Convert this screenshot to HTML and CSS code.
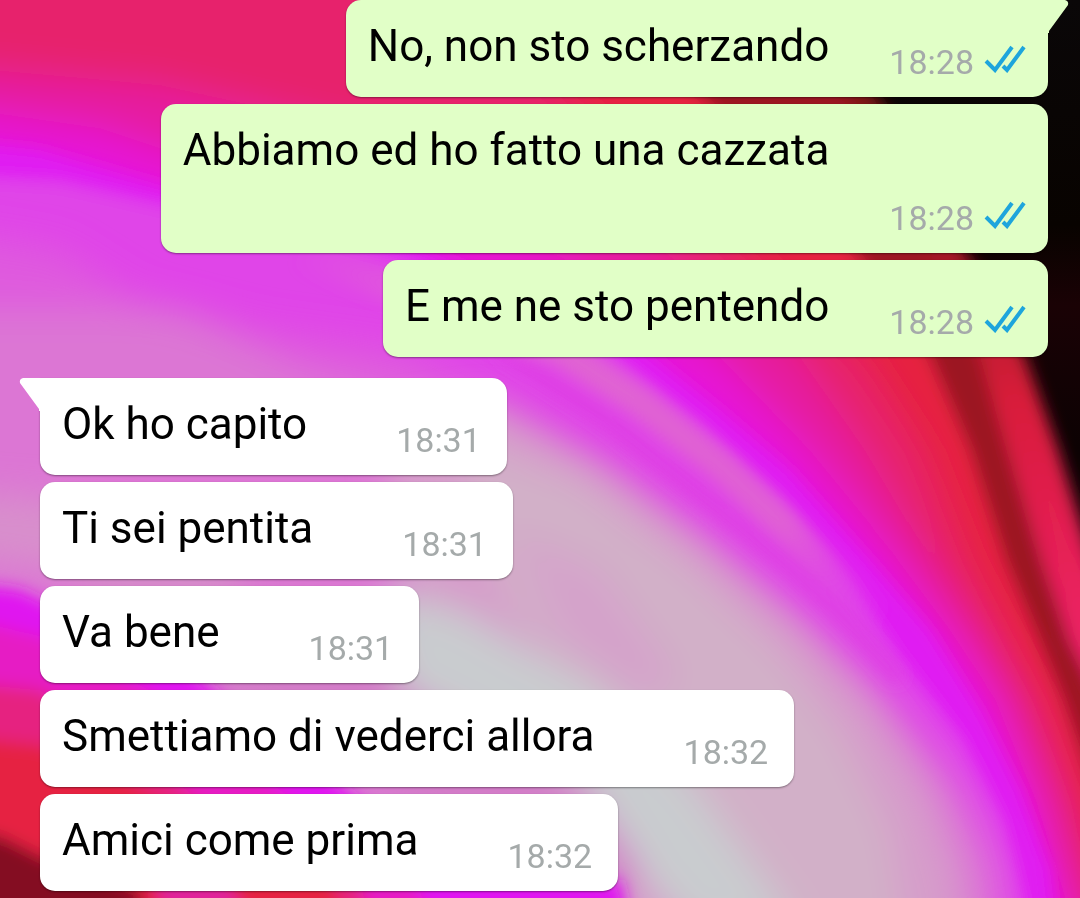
FILE: index.html
```
<!DOCTYPE html>
<html lang="it">
<head>
  <meta charset="utf-8">
  <meta name="viewport" content="width=device-width, initial-scale=1">
  <title>Chat</title>
  <link rel="stylesheet" href="styles.css">
</head>
<body>
  <!-- Wallpaper -->
  <svg class="wallpaper" viewBox="0 0 1080 898" preserveAspectRatio="none" aria-hidden="true">
    <defs>
      <filter id="soft" x="-20%" y="-20%" width="140%" height="140%"><feGaussianBlur stdDeviation="8"/></filter>
      <filter id="softer" x="-20%" y="-20%" width="140%" height="140%"><feGaussianBlur stdDeviation="18"/></filter>
      <linearGradient id="night" x1="0" y1="0" x2="0" y2="1">
        <stop offset="0" stop-color="#0a0708"/>
        <stop offset="0.25" stop-color="#080300"/>
        <stop offset="0.34" stop-color="#1a0205"/>
        <stop offset="0.5" stop-color="#0c0203"/>
      </linearGradient>
      <linearGradient id="rim" x1="0" y1="0" x2="0" y2="1">
        <stop offset="0.2" stop-color="#7c1216"/>
        <stop offset="0.45" stop-color="#d81f3a"/>
        <stop offset="0.7" stop-color="#ee2068"/>
      </linearGradient>
      <linearGradient id="streak" gradientUnits="userSpaceOnUse" x1="300" y1="250" x2="900" y2="600">
        <stop offset="0" stop-color="#e065d2" stop-opacity="0"/>
        <stop offset="0.3" stop-color="#e065d2"/>
        <stop offset="0.8" stop-color="#e060d4"/>
        <stop offset="1" stop-color="#e040ea" stop-opacity="0"/>
      </linearGradient>
    </defs>
    <rect width="1080" height="898" fill="url(#night)"/>
    <g filter="url(#soft)">
      <path fill="url(#rim)" d="M-60 -60H760L880 100L968 256L1025 357L1058 450L1092 560L1140 700V960H-60Z"/>
      <path fill="#9c1722" d="M-60 -60H600L850 100L930 256L980 357L1008 450L1042 560L1070 640L1100 700L1140 960H-60Z"/>
      <path fill="#e62440" d="M-60 -60H500L705 100L858 256L930 357L970 450L1005 560L1038 640L1062 700L1095 800L1120 960H-60Z"/>
    </g>
    <g filter="url(#softer)">
      <path fill="#e7236c" d="M-60 -60H400L560 90L750 256L865 357L925 450L968 560L1010 640L1042 700L1080 800L1120 960H-60Z"/>
      <path fill="#e61fa0" d="M-60 65L160 85L345 125L560 180L670 256L800 357L865 450L930 560L985 640L1020 700L1060 800L1110 960H-60Z"/>
      <path fill="#e619d6" d="M-60 105L100 128L220 168L400 212L560 256L720 357L810 450L900 560L960 640L1000 700L1040 800L1085 960H-60Z"/>
    </g>
    <g filter="url(#soft)">
      <path fill="#e01cf2" d="M-60 140L40 150L170 188L400 240L520 290L640 346L720 410L790 470L870 560L930 630L980 710L1020 790L1050 870L1060 960H-60Z"/>
      <path fill="#e044e8" d="M-60 175L60 182L160 205L280 225L400 258L500 300L600 345L700 425L780 500L850 585L900 660L960 740L1000 820L1020 900L1025 960H-60Z"/>
    </g>
    <g filter="url(#softer)">
      <path fill="#df5ade" d="M-60 230L60 250L140 300L260 330L400 350L500 400L600 460L700 535L790 610L880 690L950 770L1000 860L1010 960H-60Z"/>
      <path fill="#dc76d4" d="M-60 310H180L300 370L480 420L600 480L700 550L800 630L890 715L960 800L990 870L1000 960H-60Z"/>
    </g>
    <g filter="url(#soft)">
      <!-- Light streaks along the folds -->
      <path fill="none" stroke="url(#streak)" stroke-width="30" d="M300 252L400 290L560 350L640 402L720 465L790 530L850 590L900 640"/>
      <path fill="none" stroke="#df3ce4" stroke-width="14" d="M500 348L600 415L700 495L790 568L850 625L900 680"/>
    </g>
    <g filter="url(#softer)">
      <path fill="#d69cca" d="M380 420L490 405L600 466L700 540L800 625L870 700L930 790L960 870L970 960H560L420 700Z"/>
      <path fill="#d2b0c8" d="M460 440L580 480L690 565L780 650L840 730L890 830L910 960H740L600 730L500 590Z"/>
      <path fill="#d4a3ca" d="M510 530L600 570L680 680L640 700L560 640Z"/>
      <path fill="#c9cccf" d="M385 590L460 610L530 650L600 690L690 780L800 930H690L620 850L560 770L390 700Z"/>
      <path fill="#d88fcc" d="M-60 490L60 500L240 560L240 640L60 570L-60 555Z"/>
      <path fill="#d37cc8" d="M60 585L380 600L400 690L580 780L640 870L620 900L520 880L340 760L180 670Z"/>
    </g>
    <g filter="url(#soft)">
      <!-- Lower left fold -->
      <path fill="#e018f0" d="M-60 580L20 590L180 665L320 770L450 870L620 880L640 960H-60Z"/>
      <path fill="#e61bc4" d="M-60 612L40 636L150 690L280 790L420 890L440 960H-60Z"/>
      <path fill="#e62080" d="M-60 680L40 690L130 745L200 800L360 880L380 960H-60Z"/>
      <path fill="#e62442" d="M-60 735L40 745L130 782L180 810L330 880L370 960H-60Z"/>
      <path fill="#841020" d="M-60 828L0 836L40 856L140 890L150 960H-60Z"/>
      <path fill="#e0209a" d="M150 870L230 880L250 930H170Z"/>
    </g>
  </svg>

  <main class="chat">
    <!-- Sent messages -->
    <section class="group sent">
      <div class="bubble first">
        <svg class="tail" viewBox="0 0 21 33" aria-hidden="true"><path d="M0 0H17Q21 1 20 5L1 31V33H0Z"/></svg>
        <p class="text">No, non sto scherzando</p>
        <div class="meta">
          <time>18:28</time>
          <svg class="checks" viewBox="0 0 42 28" role="img" aria-label="Letto"><path d="M2 16L11 25L28 2"/><path d="M19 21L23 25L40 2"/></svg>
        </div>
      </div>
      <div class="bubble wrapped">
        <p class="text">Abbiamo ed ho fatto una cazzata</p>
        <div class="meta">
          <time>18:28</time>
          <svg class="checks" viewBox="0 0 42 28" role="img" aria-label="Letto"><path d="M2 16L11 25L28 2"/><path d="M19 21L23 25L40 2"/></svg>
        </div>
      </div>
      <div class="bubble">
        <p class="text">E me ne sto pentendo</p>
        <div class="meta">
          <time>18:28</time>
          <svg class="checks" viewBox="0 0 42 28" role="img" aria-label="Letto"><path d="M2 16L11 25L28 2"/><path d="M19 21L23 25L40 2"/></svg>
        </div>
      </div>
    </section>

    <!-- Received messages -->
    <section class="group received">
      <div class="bubble first">
        <svg class="tail" viewBox="0 0 21 33" aria-hidden="true"><path d="M21 0H4Q0 1 1 5L20 31V33H21Z"/></svg>
        <p class="text">Ok ho capito</p>
        <div class="meta"><time>18:31</time></div>
      </div>
      <div class="bubble">
        <p class="text">Ti sei pentita</p>
        <div class="meta"><time>18:31</time></div>
      </div>
      <div class="bubble">
        <p class="text">Va bene</p>
        <div class="meta"><time>18:31</time></div>
      </div>
      <div class="bubble">
        <p class="text">Smettiamo di vederci allora</p>
        <div class="meta"><time>18:32</time></div>
      </div>
      <div class="bubble">
        <p class="text">Amici come prima</p>
        <div class="meta"><time>18:32</time></div>
      </div>
    </section>
  </main>
</body>
</html>
```
FILE: styles.css
```
* {
  box-sizing: border-box;
}

body {
  margin: 0;
  background-color: #0a0708;
  font-family: Roboto, sans-serif;
  color: #000;
}

.wallpaper {
  position: fixed;
  inset: 0;
  width: 100%;
  height: 100%;
  z-index: -1;
}

.chat {
  display: flex;
  flex-direction: column;
  gap: 21px;
  padding: 0 32px 7px 40px;
}

.group {
  display: flex;
  flex-direction: column;
  gap: 7px;
}

.sent {
  align-items: flex-end;
}

.received {
  align-items: flex-start;
}

.bubble {
  position: relative;
  display: grid;
  grid-template-columns: auto auto;
  column-gap: 60px;
  padding: 20px 22px 15px;
  border-radius: 15px;
  background-color: #e1ffc7;
  box-shadow: 0 1px 2px rgba(0, 0, 0, 0.4);
}

.received .bubble {
  column-gap: 89px;
  padding-right: 26px;
  background-color: #fff;
}

.sent .first {
  border-top-right-radius: 0;
}

.received .first {
  border-top-left-radius: 0;
}

.tail {
  position: absolute;
  top: 0;
  width: 21px;
  height: 33px;
}

.sent .tail {
  left: 100%;
  fill: #e1ffc7;
}

.received .tail {
  right: 100%;
  fill: #fff;
}

.text {
  margin: 0 0 10px;
  font-size: 44px;
  line-height: 52px;
}

.meta {
  display: flex;
  align-items: center;
  align-self: end;
  gap: 10px;
  font-size: 34px;
  line-height: 40px;
  color: #a5aaaa;
}

/* Time drops to its own line, under the text */
.wrapped {
  grid-template-rows: 52px 62px;
}

.wrapped .meta {
  grid-column: 2;
  grid-row: 2;
}

.checks {
  width: 42px;
  height: 28px;
  margin-bottom: 6px;
  fill: none;
  stroke: #1ea5dc;
  stroke-width: 4;
}
```
